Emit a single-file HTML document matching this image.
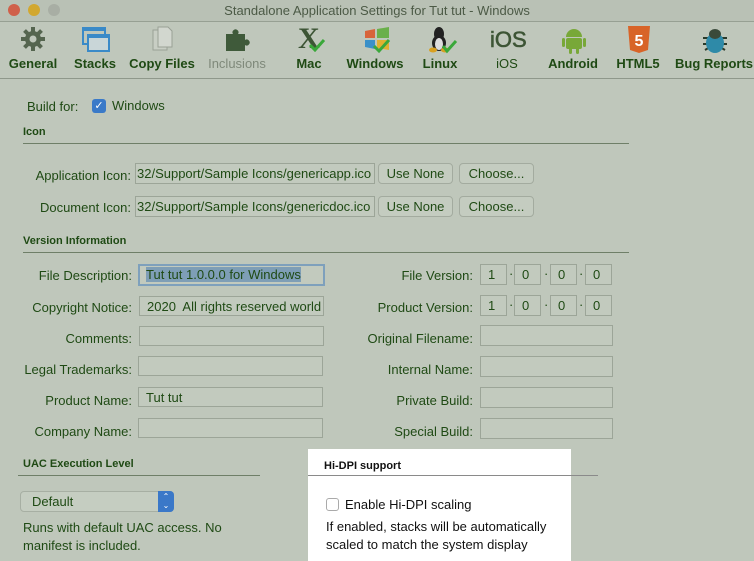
<!DOCTYPE html>
<html><head><style>
body{margin:0;width:754px;height:561px;overflow:hidden;background:#bfc7bb;font-family:"Liberation Sans",sans-serif;color:#1f4a14;position:relative}
.a{position:absolute;white-space:nowrap}
.t{font-size:13px}
.r{text-align:right}
.f{position:absolute;border:1px solid #9ca598;background:#c2cabe;height:20px;box-sizing:border-box;font-size:13px;line-height:20px;padding-left:7px}
.b{position:absolute;border:1px solid #a3ab9f;border-radius:4px;background:#c4ccc0;height:21px;box-sizing:border-box;font-size:13px;line-height:19px;text-align:center}
.h{font-size:11px;font-weight:bold}
.ln{position:absolute;height:1px;background:#6f7f68}
.tb{position:absolute;top:56px;font-size:13px;font-weight:bold;text-align:center;width:80px;margin-left:-40px}
.ic{position:absolute;top:26px}
</style></head><body>
<div class="a" style="left:0;top:0;width:754px;height:21px;background:#b9c1b5;border-bottom:1px solid #97a093"></div>
<div class="a" style="left:8px;top:4px;width:12px;height:12px;border-radius:6px;background:#d0604a"></div>
<div class="a" style="left:28px;top:4px;width:12px;height:12px;border-radius:6px;background:#d2a830"></div>
<div class="a" style="left:48px;top:4px;width:12px;height:12px;border-radius:6px;background:#a8aea4"></div>
<div class="a" style="left:0;width:754px;top:3px;text-align:center;font-size:13px;color:#4c5a46">Standalone Application Settings for Tut tut - Windows</div>
<div class="a" style="left:0;top:78px;width:754px;height:1px;background:#8f988b"></div>

<svg class="ic" style="left:20px" width="26" height="26" viewBox="0 0 26 26"><g fill="#55654f"><circle cx="13" cy="13" r="8"/><rect x="11" y="1" width="4" height="24"/><rect x="1" y="11" width="24" height="4"/><rect x="11" y="1" width="4" height="24" transform="rotate(45 13 13)"/><rect x="11" y="1" width="4" height="24" transform="rotate(-45 13 13)"/></g><circle cx="13" cy="13" r="3.5" fill="#bfc7bb"/></svg>
<svg class="ic" style="left:82px" width="28" height="26"><rect x="1" y="2" width="22" height="16" fill="none" stroke="#3a8ac8" stroke-width="2"/><rect x="1" y="2" width="22" height="3" fill="#3a8ac8"/><rect x="6" y="9" width="21" height="16" fill="#c9d6d8" stroke="#3a8ac8" stroke-width="2"/><rect x="6" y="9" width="21" height="3" fill="#3a8ac8"/></svg>
<svg class="ic" style="left:151px" width="24" height="26"><path d="M2 4h10l4 4v16H2z" fill="#c8cec4" stroke="#9aa196"/><path d="M7 1h10l4 4v16H7z" fill="#d2d7cf" stroke="#9aa196"/></svg>
<svg class="ic" style="left:224px" width="28" height="26"><path d="M2 8h7a3 3 0 1 1 5 0h7v6a3 3 0 1 1 0 5v6H2z" fill="#3f5a3a"/></svg>
<div class="a" style="left:298px;top:22px;font-size:30px;font-weight:bold;color:#3d5535;font-family:'Liberation Serif',serif">X</div>
<svg class="ic" style="left:308px;top:38px" width="18" height="14"><path d="M2 7l5 5 9-10" fill="none" stroke="#3aa83a" stroke-width="3"/></svg>
<svg class="ic" style="left:362px" width="30" height="28"><path d="M3 5l10-2v9H3z" fill="#d8643a"/><path d="M15 3l12-2v11H15z" fill="#6ab04a"/><path d="M3 14h10v9L3 21z" fill="#3a90c8"/><path d="M15 14h12v10l-12-2z" fill="#e0b030"/><path d="M12 20l5 5 10-11" fill="none" stroke="#3aa83a" stroke-width="3"/></svg>
<svg class="ic" style="left:426px" width="32" height="28"><ellipse cx="13" cy="8" rx="5" ry="7" fill="#222"/><ellipse cx="13" cy="17" rx="7" ry="8" fill="#222"/><ellipse cx="13" cy="18" rx="4" ry="6" fill="#ddd"/><ellipse cx="7" cy="24" rx="4" ry="2.5" fill="#d8a020"/><ellipse cx="19" cy="24" rx="4" ry="2.5" fill="#d8a020"/><path d="M17 20l4 5 9-10" fill="none" stroke="#3aa83a" stroke-width="3"/></svg>
<div class="a" style="left:490px;top:27px;font-size:22px;color:#3d5535;-webkit-text-stroke:0.6px #3d5535">iOS</div>
<svg class="ic" style="left:562px" width="24" height="28"><path d="M4 11a8 8 0 0 1 16 0z" fill="#78a838"/><rect x="4" y="12" width="16" height="11" rx="2" fill="#78a838"/><rect x="0" y="12" width="3" height="9" rx="1.5" fill="#78a838"/><rect x="21" y="12" width="3" height="9" rx="1.5" fill="#78a838"/><rect x="7" y="22" width="3" height="6" rx="1.5" fill="#78a838"/><rect x="14" y="22" width="3" height="6" rx="1.5" fill="#78a838"/></svg>
<svg class="ic" style="left:627px" width="24" height="28"><path d="M1 0h22l-2 24-9 3-9-3z" fill="#d86428"/><text x="12" y="20" font-size="16" font-weight="bold" fill="#fff" text-anchor="middle" font-family="Liberation Sans">5</text></svg>
<svg class="ic" style="left:700px" width="30" height="28"><g stroke="#2a3a2a" stroke-width="2"><path d="M3 12h24M3 18h24M5 24l5-3M25 24l-5-3"/></g><ellipse cx="15" cy="17" rx="9" ry="10" fill="#2e8aa8"/><ellipse cx="15" cy="8" rx="6" ry="5" fill="#3a4a3a"/></svg>

<div class="tb" style="left:33px">General</div>
<div class="tb" style="left:95px">Stacks</div>
<div class="tb" style="left:162px">Copy Files</div>
<div class="tb" style="left:237px;font-weight:normal;color:#7f897a">Inclusions</div>
<div class="tb" style="left:309px">Mac</div>
<div class="tb" style="left:375px">Windows</div>
<div class="tb" style="left:440px">Linux</div>
<div class="tb" style="left:507px;font-weight:normal">iOS</div>
<div class="tb" style="left:573px">Android</div>
<div class="tb" style="left:638px">HTML5</div>
<div class="tb" style="left:714px;width:100px;margin-left:-50px">Bug Reports</div>

<div class="a t" style="left:27px;top:99px">Build for:</div>
<div class="a" style="left:92px;top:99px;width:14px;height:14px;border-radius:3px;background:#3a7ac8;color:#fff;font-size:11px;line-height:14px;text-align:center">✓</div>
<div class="a t" style="left:112px;top:98px">Windows</div>
<div class="a h" style="left:23px;top:126px">Icon</div>
<div class="ln" style="left:23px;top:143px;width:606px"></div>
<div class="a t r" style="left:0;width:131px;top:168px">Application Icon:</div>
<div class="f" style="left:135px;top:163px;width:240px;height:21px;padding-left:1px">32/Support/Sample Icons/genericapp.ico</div>
<div class="b" style="left:378px;top:163px;width:75px">Use None</div>
<div class="b" style="left:459px;top:163px;width:75px">Choose...</div>
<div class="a t r" style="left:0;width:131px;top:200px">Document Icon:</div>
<div class="f" style="left:135px;top:196px;width:240px;height:21px;padding-left:1px">32/Support/Sample Icons/genericdoc.ico</div>
<div class="b" style="left:378px;top:196px;width:75px">Use None</div>
<div class="b" style="left:459px;top:196px;width:75px">Choose...</div>
<div class="a h" style="left:23px;top:235px">Version Information</div>
<div class="ln" style="left:23px;top:252px;width:606px"></div>

<div class="a t r" style="left:0;width:132px;top:268px">File Description:</div>
<div class="f" style="left:138px;top:264px;width:187px;height:22px;border:2px solid #7ea0bc;padding-left:6px;line-height:18px"><span style="background:#7e9eb6">Tut tut 1.0.0.0 for Windows</span></div>
<div class="a t r" style="left:0;width:132px;top:300px">Copyright Notice:</div>
<div class="f" style="left:139px;top:296px;width:185px">2020&nbsp; All rights reserved world</div>
<div class="a t r" style="left:0;width:132px;top:331px">Comments:</div>
<div class="f" style="left:139px;top:326px;width:185px"></div>
<div class="a t r" style="left:0;width:132px;top:362px">Legal Trademarks:</div>
<div class="f" style="left:138px;top:356px;width:185px"></div>
<div class="a t r" style="left:0;width:132px;top:393px">Product Name:</div>
<div class="f" style="left:138px;top:387px;width:185px">Tut tut</div>
<div class="a t r" style="left:0;width:132px;top:424px">Company Name:</div>
<div class="f" style="left:138px;top:418px;width:185px"></div>

<div class="a t r" style="left:300px;width:173px;top:268px">File Version:</div>
<div class="a t r" style="left:300px;width:173px;top:300px">Product Version:</div>
<div class="a t r" style="left:300px;width:173px;top:331px">Original Filename:</div>
<div class="a t r" style="left:300px;width:173px;top:362px">Internal Name:</div>
<div class="a t r" style="left:300px;width:173px;top:393px">Private Build:</div>
<div class="a t r" style="left:300px;width:173px;top:424px">Special Build:</div>
<div class="f" style="left:480px;top:264px;width:27px;height:21px">1</div><div class="a t" style="left:509px;top:266px">·</div>
<div class="f" style="left:514px;top:264px;width:27px;height:21px">0</div><div class="a t" style="left:544px;top:266px">·</div>
<div class="f" style="left:550px;top:264px;width:27px;height:21px">0</div><div class="a t" style="left:579px;top:266px">·</div>
<div class="f" style="left:585px;top:264px;width:27px;height:21px">0</div>
<div class="f" style="left:480px;top:295px;width:27px;height:21px">1</div><div class="a t" style="left:509px;top:297px">·</div>
<div class="f" style="left:514px;top:295px;width:27px;height:21px">0</div><div class="a t" style="left:544px;top:297px">·</div>
<div class="f" style="left:550px;top:295px;width:27px;height:21px">0</div><div class="a t" style="left:579px;top:297px">·</div>
<div class="f" style="left:585px;top:295px;width:27px;height:21px">0</div>
<div class="f" style="left:480px;top:325px;width:133px;height:21px"></div>
<div class="f" style="left:480px;top:356px;width:133px;height:21px"></div>
<div class="f" style="left:480px;top:387px;width:133px;height:21px"></div>
<div class="f" style="left:480px;top:418px;width:133px;height:21px"></div>

<div class="a h" style="left:23px;top:458px">UAC Execution Level</div>
<div class="ln" style="left:18px;top:475px;width:242px"></div>
<div class="a" style="left:20px;top:491px;width:154px;height:21px;box-sizing:border-box;border:1px solid #a7afa3;border-radius:4px;background:#c5cdc1;font-size:13px;line-height:20px;padding-left:11px">Default</div>
<div class="a" style="left:158px;top:491px;width:16px;height:21px;background:#3a78c8;border-radius:0 4px 4px 0;color:#fff;font-size:8px;line-height:9px;text-align:center;padding-top:1px;box-sizing:border-box">⌃<br>⌄</div>
<div class="a t" style="left:23px;top:519px;line-height:18px">Runs with default UAC access. No<br>manifest is included.</div>

<div class="a" style="left:308px;top:449px;width:263px;height:112px;background:#fff"></div>
<div class="a h" style="left:324px;top:460px;color:#111">Hi-DPI support</div>
<div class="ln" style="left:308px;top:475px;width:290px;background:#8a8a8a"></div>
<div class="a" style="left:326px;top:498px;width:13px;height:13px;border:1px solid #aaa;border-radius:3px;box-sizing:border-box"></div>
<div class="a t" style="left:345px;top:497px;color:#111">Enable Hi-DPI scaling</div>
<div class="a" style="left:326px;top:518px;font-size:13px;line-height:18px;color:#111">If enabled, stacks will be automatically<br>scaled to match the system display</div>
</body></html>
